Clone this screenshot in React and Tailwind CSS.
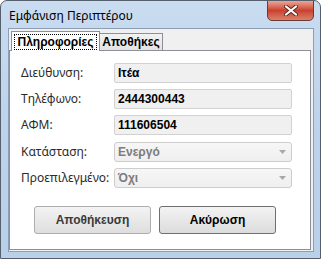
import React from "react";

const label = "text-[12px] text-[#2b2b2b] font-['Noto_Sans',sans-serif] leading-none";
const value = "text-[12px] font-bold text-black font-['Liberation_Sans',Arial,sans-serif] leading-none";

function TextRow({ name, text, top }) {
    return (
        <div className={`flex items-center h-[20px] ${top}`}>
            <div className={`w-[93px] ${label}`}>{name}</div>
            <div className="w-[178px] h-[20px] flex items-center pl-[3px] bg-[#f0f0f0] border border-[#d2d2d2] rounded-[2px]">
                <span className={value}>{text}</span>
            </div>
        </div>
    );
}

function ComboRow({ name, text, top }) {
    return (
        <div className={`flex items-center h-[20px] ${top}`}>
            <div className={`w-[93px] ${label}`}>{name}</div>
            <div className="w-[178px] h-[20px] flex items-center justify-between pl-[3px] pr-[5px] bg-gradient-to-b from-[#f6f6f6] to-[#efefef] border border-[#cdcdcd] rounded-[3px]">
                <span className="text-[12px] font-bold text-[#7c7c7c] font-['Liberation_Sans',Arial,sans-serif] leading-none">{text}</span>
                <svg width="7" height="4" viewBox="0 0 7 4">
                    <path d="M0 0 L7 0 L3.5 4 Z" fill="#a8a8a8" />
                </svg>
            </div>
        </div>
    );
}

export default function App() {
    return (
        <div className="w-[321px] h-[259px] relative overflow-hidden rounded-t-[7px] border border-[#56606d] bg-gradient-to-b from-[#c9dcf0] via-[#bdd3eb] to-[#b9d0e9] flex flex-col">
            {/* title bar */}
            <div className="h-[27px] flex items-center pl-[8px] pt-[2px]">
                <span className="text-[12px] text-black font-['Noto_Sans',sans-serif] leading-none">Εμφάνιση Περιπτέρου</span>
            </div>
            <div className="absolute top-[-1px] left-[266px] w-[47px] h-[21px] rounded-b-[5px] border border-[#6b3a33] bg-gradient-to-b from-[#eaa596] via-[#c9402f] to-[#d8806a] flex items-center justify-center">
                <svg width="14" height="11" viewBox="0 0 14 11">
                    <path d="M2 1.5 L12 9.5 M12 1.5 L2 9.5" stroke="#5a2a22" strokeWidth="4" strokeLinecap="round" />
                    <path d="M2 1.5 L12 9.5 M12 1.5 L2 9.5" stroke="#ffffff" strokeWidth="2.2" strokeLinecap="round" />
                </svg>
            </div>

            {/* client area */}
            <div className="ml-[7px] w-[306px] h-[224px] border border-[#8c9fb6] bg-[#f0f0f0] flex flex-col">
                <div className="h-[21px] flex items-end pl-[2px]">
                    <div className="relative z-10 -mb-[1px] w-[89px] h-[20px] bg-white border border-b-0 border-[#8e9099] flex items-center justify-center">
                        <span className="px-[2px] py-[1px] border border-dotted border-black text-[12px] font-bold text-black font-['Liberation_Sans',Arial,sans-serif] leading-none">Πληροφορίες</span>
                    </div>
                    <div className="w-[63px] h-[17px] bg-gradient-to-b from-[#f2f2f2] to-[#e3e3e3] border border-l-0 border-b-0 border-[#8e9099] flex items-center justify-center">
                        <span className="text-[12px] font-bold text-black font-['Liberation_Sans',Arial,sans-serif] leading-none">Αποθήκες</span>
                    </div>
                </div>
                <div className="w-[302px] h-[200px] bg-white border border-[#8e9099] flex flex-col pl-[11px]">
                    <TextRow name="Διεύθυνση:" text="Ιτέα" top="mt-[12px]" />
                    <TextRow name="Τηλέφωνο:" text="2444300443" top="mt-[6px]" />
                    <TextRow name="ΑΦΜ:" text="111606504" top="mt-[6px]" />
                    <ComboRow name="Κατάσταση:" text="Ενεργό" top="mt-[7px]" />
                    <ComboRow name="Προεπιλεγμένο:" text="Όχι" top="mt-[6px]" />
                    <div className="flex gap-[8px] mt-[18px] pl-[13px]">
                        <button className="w-[117px] h-[28px] rounded-[3px] border border-[#adadad] bg-gradient-to-b from-[#f3f3f3] to-[#dedede] text-[12px] font-bold text-[#3a3a3a] font-['Liberation_Sans',Arial,sans-serif]">
                            Αποθήκευση
                        </button>
                        <button className="w-[117px] h-[28px] rounded-[3px] border border-[#6f6f6f] bg-gradient-to-b from-[#f3f3f3] to-[#dcdcdc] text-[12px] font-bold text-black font-['Liberation_Sans',Arial,sans-serif]">
                            Ακύρωση
                        </button>
                    </div>
                </div>
            </div>
        </div>
    );
}
